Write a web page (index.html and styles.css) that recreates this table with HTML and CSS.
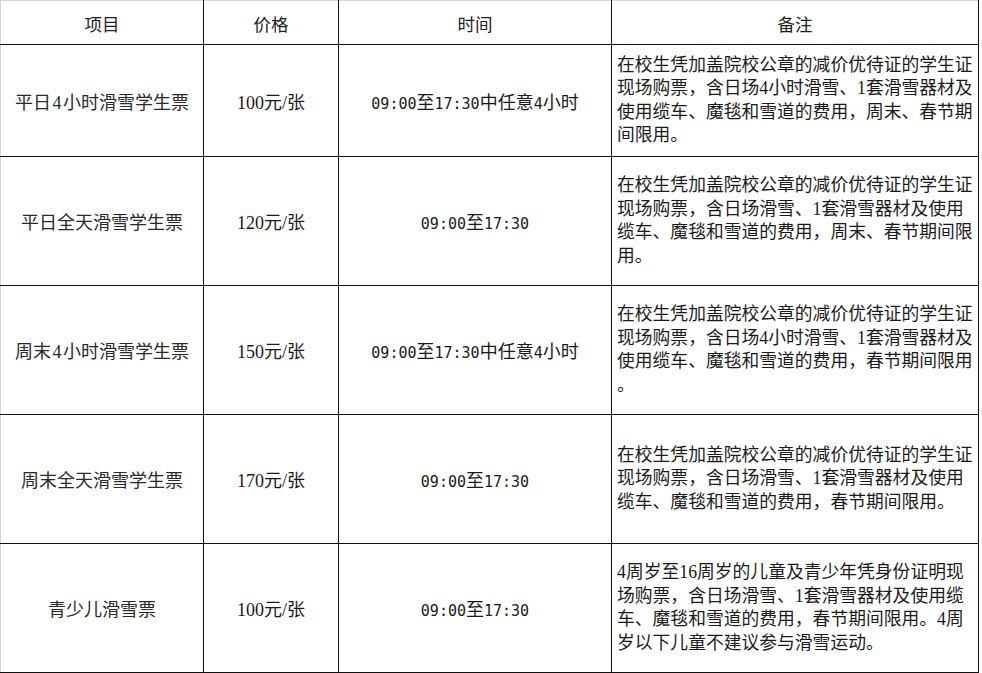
FILE: index.html
```html
<!DOCTYPE html>
<html lang="zh-CN">
<head>
<meta charset="utf-8">
<title>滑雪票价</title>
<link rel="stylesheet" href="styles.css">
</head>
<body>
<table class="price-table">
  <colgroup>
    <col class="c1"><col class="c2"><col class="c3"><col class="c4">
  </colgroup>
  <thead>
    <tr class="head">
      <th>项目</th>
      <th>价格</th>
      <th>时间</th>
      <th>备注</th>
    </tr>
  </thead>
  <tbody>
    <tr class="row-first">
      <td class="name">平日<span class="d">4</span>小时滑雪学生票</td>
      <td class="price">100元/张</td>
      <td class="time"><span class="t">09:00</span>至<span class="t">17:30</span>中任意<span class="t">4</span>小时</td>
      <td class="note">在校生凭加盖院校公章的减价优待证的学生证<br>现场购票，含日场4小时滑雪、1套滑雪器材及<br>使用缆车、魔毯和雪道的费用，周末、春节期<br>间限用。</td>
    </tr>
    <tr class="row">
      <td class="name">平日全天滑雪学生票</td>
      <td class="price">120元/张</td>
      <td class="time"><span class="t">09:00</span>至<span class="t">17:30</span></td>
      <td class="note">在校生凭加盖院校公章的减价优待证的学生证<br>现场购票，含日场滑雪、1套滑雪器材及使用<br>缆车、魔毯和雪道的费用，周末、春节期间限<br>用。</td>
    </tr>
    <tr class="row">
      <td class="name">周末<span class="d">4</span>小时滑雪学生票</td>
      <td class="price">150元/张</td>
      <td class="time"><span class="t">09:00</span>至<span class="t">17:30</span>中任意<span class="t">4</span>小时</td>
      <td class="note">在校生凭加盖院校公章的减价优待证的学生证<br>现场购票，含日场4小时滑雪、1套滑雪器材及<br>使用缆车、魔毯和雪道的费用，春节期间限用<br>。</td>
    </tr>
    <tr class="row">
      <td class="name">周末全天滑雪学生票</td>
      <td class="price">170元/张</td>
      <td class="time"><span class="t">09:00</span>至<span class="t">17:30</span></td>
      <td class="note">在校生凭加盖院校公章的减价优待证的学生证<br>现场购票，含日场滑雪、1套滑雪器材及使用<br>缆车、魔毯和雪道的费用，春节期间限用。</td>
    </tr>
    <tr class="row">
      <td class="name">青少儿滑雪票</td>
      <td class="price">100元/张</td>
      <td class="time"><span class="t">09:00</span>至<span class="t">17:30</span></td>
      <td class="note">4周岁至16周岁的儿童及青少年凭身份证明现<br>场购票，含日场滑雪、1套滑雪器材及使用缆<br>车、魔毯和雪道的费用，春节期间限用。4周<br>岁以下儿童不建议参与滑雪运动。</td>
    </tr>
  </tbody>
</table>
</body>
</html>
```

FILE: styles.css
```css
html, body {
  margin: 0;
  padding: 0;
  background: #ffffff;
}

body {
  font-family: "Liberation Serif", "Noto Sans CJK SC", serif;
  color: #1a1a1a;
}

.price-table {
  border-collapse: collapse;
  table-layout: fixed;
  width: 979px;
}

.c1 { width: 203px; }
.c2 { width: 135px; }
.c3 { width: 273px; }
.c4 { width: 367px; }

.price-table th,
.price-table td {
  border: 1px solid #111111;
  padding: 0;
  text-align: center;
  vertical-align: middle;
  font-size: 18px;
  font-weight: normal;
}

.price-table thead th {
  border-top-color: #d4d4d4;
  font-family: "Noto Sans CJK SC", sans-serif;
  font-size: 17.5px;
  padding-top: 1px;
  color: #222222;
}

.price-table tr > :first-child {
  border-left-color: #d4d4d4;
}

.head { height: 44px; }
.row-first { height: 112px; }
.row { height: 129px; }

.name {
  color: #2a2a2a;
}

.d {
  margin: 0 1.5px;
}

.price {
  color: #1a1a1a;
}

.time {
  font-family: "Noto Sans CJK SC", sans-serif;
  font-size: 18px;
}

.t {
  font-family: "DejaVu Sans Mono", monospace;
  font-size: 15px;
}

.price-table td.note {
  text-align: left;
  padding: 0 4px 0 5px;
  white-space: nowrap;
  line-height: 23.5px;
  font-size: 17.8px;
}
```
